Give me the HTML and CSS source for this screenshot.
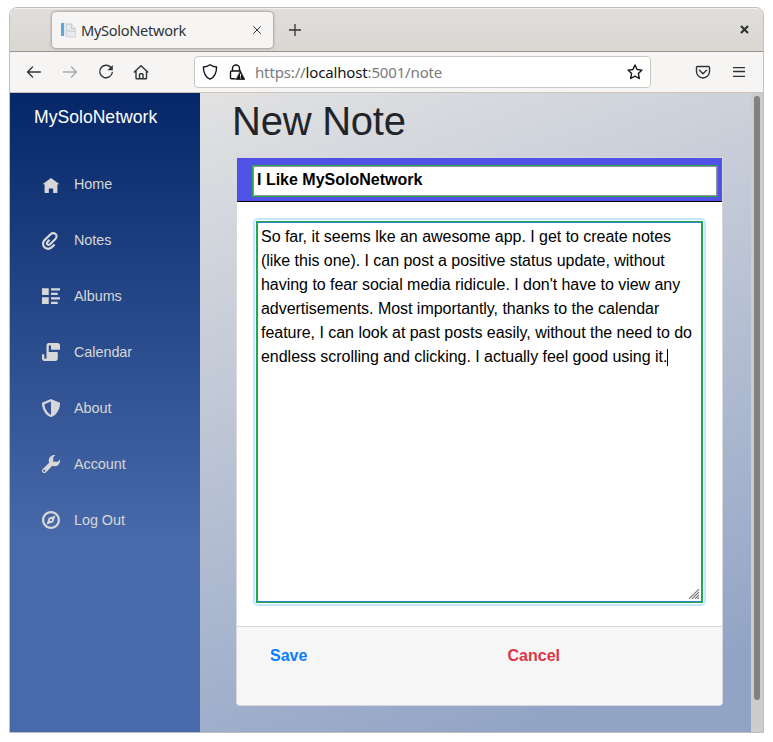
FILE: index.html
```html
<!DOCTYPE html>
<html lang="en">
<head>
<meta charset="utf-8">
<title>MySoloNetwork</title>
<link rel="stylesheet" href="styles.css">
</head>
<body>
<div class="window">
  <header class="titlebar">
    <div class="tab">
      <svg class="favicon" width="16" height="16" viewBox="0 0 16 16"><path fill="#5ba9dc" d="M1 1h3v13H1z"/><path fill="#eceff2" stroke="#d0d6dc" stroke-width=".7" d="M4.800 1.400h7v12h-7z"/><path fill="#e7ebf0" stroke="#c3cad3" stroke-width=".7" d="M6.500 2.500h5l4 4v8.500h-9z"/><path fill="none" stroke="#c0cad6" d="M11.500 2.500v4h4M6.500 9h9"/></svg>
      <span class="tab-title">MySoloNetwork</span>
      <svg class="tab-close" width="8" height="8" viewBox="0 0 8 8"><path d="M.3.3l7.400 7.400M7.700.3L.3 7.700" stroke="#2e3436" fill="none"/></svg>
    </div>
    <svg class="new-tab" width="12" height="12" viewBox="0 0 12 12"><path d="M6 0v12M0 6h12" stroke="#2e3436" stroke-width="1.300"/></svg>
    <svg class="win-close" width="9" height="9" viewBox="0 0 9 9"><path d="M1 1l7 7M8 1L1 8" stroke="#2e3436" stroke-width="2.200"/></svg>
  </header>
  <div class="toolbar">
    <svg class="tool back" width="16" height="16" viewBox="0 0 16 16"><path d="M14.300 8H1.500M6.500 3l-5 5 5 5"/></svg>
    <svg class="tool forward" width="16" height="16" viewBox="0 0 16 16"><path d="M1.500 8h13M9.500 3l5 5-5 5"/></svg>
    <svg class="tool reload" width="16" height="16" viewBox="0 0 16 16"><path d="M12.800 3.300A6.300 6.300 0 1 0 14.300 8.500"/><path d="M14.800 1v5.300H9.500z" fill="#2e3436" stroke="none"/></svg>
    <svg class="tool home" width="16" height="16" viewBox="0 0 16 16"><path d="M1.300 8L8 1.800 14.700 8M3 6.800v7.200q0 .8.800.8h8.900q.8 0 .8-.8V6.800M6.500 14.500v-4q0-.8.800-.8h1.900q.8 0 .8.800v4"/></svg>
    <div class="url">
      <svg class="tool" width="16" height="16" viewBox="0 0 16 16"><path d="M8 .8c2 1.400 4.200 2.100 6.600 2.200C14.600 8.600 13 13 8 15.200 3 13 1.400 8.600 1.400 3 3.800 2.900 6 2.200 8 .8z"/></svg>
      <svg class="tool lock" width="16" height="16" viewBox="0 0 16 16"><path d="M3.500 7V4.500a3.500 3.500 0 0 1 7 0V7M6 14.700H2.500q-1 0-1-1V8q0-1 1-1h9"/><path d="M11.500 7.200l4.500 8.600H7z" fill="#15141a" stroke="#15141a" stroke-width=".6"/><path d="M11.500 10.300v2M11.500 13.800v.3" stroke="#fff" stroke-width="1"/></svg>
      <span class="address">https://<b>localhost</b>:5001/note</span>
      <svg class="tool star" width="16" height="16" viewBox="0 0 16 16"><path d="M8 1l2.100 4.500 4.900.6-3.600 3.400.9 5L8 12.100l-4.300 2.400.9-5L1 6.100l4.900-.6z"/></svg>
    </div>
    <svg class="tool pocket" width="16" height="16" viewBox="0 0 16 16"><path d="M2.500 2.500h11q1 0 1 1v4a6.500 6.500 0 0 1-13 0v-4q0-1 1-1zM4.500 6.300L8 9.700l3.500-3.400"/></svg>
    <svg class="menu" width="12" height="10" viewBox="0 0 12 10"><path d="M0 .5h12M0 4.500h12M0 9.500h12" stroke="#2e3436" stroke-width="1.300"/></svg>
  </div>
  <div class="page">
    <aside class="sidebar">
      <div class="brand">MySoloNetwork</div>
      <nav>
        <a class="item"><svg class="oi" viewBox="0 0 8 8"><path transform="translate(.2 1.300) scale(.95)" d="M4 0l-4 3h1v4h2v-2h2v2h2v-4.030l1 .030-4-3z"/></svg>Home</a>
        <a class="item"><svg class="oi" viewBox="0 0 8 8"><path transform="translate(0 .400)" d="M5 0c-.510 0-1.020.210-1.410.590l-2.780 2.720c-1.070 1.070-1.070 2.800 0 3.880 1.070 1.070 2.800 1.070 3.880 0l1.250-1.250-.690-.690-1.160 1.130-.130.130c-.690.690-1.810.690-2.500 0-.680-.680-.660-1.780 0-2.470l2.840-2.750c.390-.390 1.020-.390 1.410 0 .390.390.370 1.020 0 1.410l-2.560 2.530c-.100.100-.270.100-.380 0-.100-.100-.100-.270 0-.380l.03-.03.910-.940-.690-.690-.970.970c-.480.480-.480 1.270 0 1.750s1.270.490 1.750 0l2.560-2.500c.780-.780.780-2.040 0-2.810-.390-.390-.900-.590-1.410-.590z"/></svg>Notes</a>
        <a class="item"><svg class="oi" viewBox="0 0 8 8"><path transform="translate(0 .500)" d="M0 0v3h3v-3h-3zm4 0v1h4v-1h-4zm0 2v1h3v-1h-3zm-4 2v3h3v-3h-3zm4 0v1h4v-1h-4zm0 2v1h3v-1h-3z"/></svg>Albums</a>
        <a class="item"><svg class="oi" viewBox="0 0 8 8"><path d="M3 0c-.550 0-1 .450-1 1v5.500c0 .280-.220.500-.500.500s-.500-.220-.500-.500v-1.500h-1v2c0 .550.450 1 1 1h5c.550 0 1-.450 1-1v-3h-4v-2.500c0-.280.220-.500.500-.500s.500.220.500.500v1.500h4v-2c0-.550-.450-1-1-1h-4z"/></svg>Calendar</a>
        <a class="item"><svg class="oi" viewBox="0 0 8 8"><path d="M4 0l-.190.090-3.500 1.470-.310.130v.310c0 1.660.670 3.120 1.470 4.190.400.530.830.970 1.250 1.280.420.310.830.530 1.280.530.460 0 .860-.220 1.280-.530.420-.310.850-.750 1.250-1.280.800-1.070 1.470-2.530 1.470-4.190v-.310l-.310-.130-3.500-1.470-.190-.090zm0 1.090v5.910c-.040 0-.330-.070-.660-.310s-.710-.630-1.060-1.090c-.640-.850-1.140-2.030-1.220-3.280l2.940-1.220z"/></svg>About</a>
        <a class="item"><svg class="oi" viewBox="0 0 8 8"><path d="M5.500 0c-1.380 0-2.500 1.120-2.500 2.500 0 .320.080.620.190.910l-2.910 2.880c-.390.390-.390 1.050 0 1.440.200.200.460.280.720.280.260 0 .520-.090.720-.280l2.880-2.910c.280.110.580.190.910.190 1.380 0 2.500-1.120 2.500-2.500 0-.160 0-.320-.030-.470l-.970.970h-2v-2l.970-.970c-.150-.030-.310-.030-.470-.030zm-4.500 6.500c.280 0 .500.220.500.500s-.220.500-.500.500-.500-.220-.500-.500.220-.500.500-.500z"/></svg>Account</a>
        <a class="item"><svg class="oi" viewBox="0 0 8 8"><path d="M4 0c-2.200 0-4 1.800-4 4s1.800 4 4 4 4-1.800 4-4-1.800-4-4-4zm0 1c1.660 0 3 1.340 3 3s-1.340 3-3 3-3-1.340-3-3 1.340-3 3-3zm2 1l-3 1-1 3 3-1 1-3zm-2 1.500c.280 0 .500.220.500.500s-.220.500-.500.500-.500-.220-.500-.500.220-.500.500-.500z"/></svg>Log Out</a>
      </nav>
    </aside>
    <main class="main">
      <h1>New Note</h1>
      <section class="card">
        <div class="card-header"><div class="title-input">I Like MySoloNetwork</div></div>
        <div class="card-body">
          <div class="focus-ring">
            <div class="note">So far, it seems lke an awesome app. I get to create notes<br>(like this one). I can post a positive status update, without<br>having to fear social media ridicule. I don't have to view any<br>advertisements. Most importantly, thanks to the calendar<br>feature, I can look at past posts easily, without the need to do<br>endless scrolling and clicking. I actually feel good using it.<span class="caret"></span>
              <svg class="grip" width="10" height="10" viewBox="0 0 10 10"><path d="M0 10L10 0M3 10l7-7M6 10l4-4M8.500 10L10 8.500" stroke="#777" stroke-width="1.100"/></svg>
            </div>
          </div>
        </div>
        <div class="card-footer"><b class="save">Save</b><b class="cancel">Cancel</b></div>
      </section>
    </main>
    <div class="scrollbar"><div class="thumb"></div></div>
  </div>
</div>
</body>
</html>
```
FILE: styles.css
```css
* { box-sizing: border-box; }
body { margin: 0; background: #fff; font-family: "Liberation Sans", Arial, sans-serif; }
svg { display: block; flex: none; }
.window { width: 755px; height: 726px; margin: 7px 0 0 9px; border: 1px solid #bfbfbd; border-radius: 8px 8px 0 0; overflow: hidden; }
.titlebar { height: 44px; display: flex; align-items: center; padding: 0 14px 0 42px; background: linear-gradient(#e1dedb, #dad6d2); border-bottom: 1px solid #979490; box-shadow: inset 0 1px #f3f1f0; }
.tab { width: 221px; height: 36px; display: flex; align-items: center; padding: 0 12px 0 8px; background: #f6f5f4; border-radius: 4px; box-shadow: 0 0 3px rgba(0,0,0,.5); }
.tab-title { font: 14.6px/20px "Noto Sans", sans-serif; letter-spacing: -.3px; color: #2e3436; margin-left: 5px; }
.tab-close { margin-left: auto; }
.new-tab { margin-left: 16px; }
.win-close { margin-left: auto; }
.toolbar { height: 41px; display: flex; align-items: center; padding-left: 16px; background: #f6f5f4; border-bottom: 1px solid #ccc4bc; }
.tool { fill: none; stroke: #2e3436; stroke-width: 1.4; stroke-linecap: round; stroke-linejoin: round; }
.forward { margin-left: 20px; stroke: #aaabaa; }
.reload { margin-left: 20px; }
.home { margin-left: 19px; }
.url { width: 457px; height: 32px; margin-left: 45px; padding: 0 7px; display: flex; align-items: center; background: #fff; border: 1px solid #cdc7c2; border-radius: 4px; }
.url .tool { stroke: #15141a; }
.lock { margin-left: 11px; }
.address { margin-left: 10px; font: 15px/20px "Noto Sans", sans-serif; letter-spacing: -.15px; color: #7a7a7c; }
.address b { font-weight: 400; color: #15141a; }
.star { margin-left: auto; }
.pocket { margin-left: 44px; }
.menu { margin-left: 22px; }
.page { display: flex; height: 639px; }
.sidebar { width: 190px; background: linear-gradient(#052767 0%, #486aab 70%); }
.brand { height: 56px; padding: 11px 0 0 24px; font-size: 17.6px; line-height: 26px; color: #fff; }
nav { display: flex; flex-direction: column; padding-top: 11px; }
.item { height: 48px; margin-bottom: 8px; padding-left: 32px; display: flex; align-items: center; gap: 14px; font-size: 14.4px; letter-spacing: -.04px; color: #d7d7d7; }
.oi { width: 18px; height: 18px; margin-top: -1px; fill: #d7d7d7; overflow: visible; }
.main { width: 551px; padding: 4px 28px 0 36px; background: linear-gradient(160deg, #e2e2e2 0%, #92a4c6 90%); }
h1 { margin: 0 0 12px -4px; font-size: 40px; line-height: 48px; font-weight: 400; letter-spacing: -.25px; color: #212529; }
.card { height: 549px; background: #fff; border: 1px solid #d6d8db; border-radius: 0 0 4px 4px; display: flex; flex-direction: column; overflow: hidden; }
.card-header { height: 44px; padding: 7px 4px 0 15px; background: #4f52e6; border-bottom: 1px solid #000; }
.title-input { height: 32px; padding-left: 4px; background: #fff; border: 1px solid #28a745; outline: 1px solid #8f8f9d; outline-offset: -2px; font-size: 16px; line-height: 27px; font-weight: 700; color: #000; }
.card-body { height: 424px; padding: 16px 16px 0; }
.focus-ring { padding: 1px; border: 2px solid #c6e5ff; border-radius: 5px; }
.note { position: relative; height: 382px; padding: 2px 3px; border: 1px solid #22ab4e; box-shadow: inset 0 0 0 1px #2f86d0; padding: 3px 4px; font-size: 16px; line-height: 24px; letter-spacing: -.03px; color: #000; white-space: nowrap; }
.caret { display: inline-block; width: 1px; height: 17px; background: #000; vertical-align: -4px; }
.grip { position: absolute; right: 3px; bottom: 3px; }
.card-footer { flex: 1; display: flex; background: #f6f6f6; border-top: 1px solid #d6d6d6; padding: 17px 33px; font-size: 16px; line-height: 24px; }
.save { width: 237.5px; color: #0b7dff; }
.cancel { color: #dc3545; }
.scrollbar { width: 12px; padding: 3px 3px 0; background: #cdcdcd; }
.thumb { width: 6px; height: 604px; border-radius: 3px; background: #7f8281; }
```
